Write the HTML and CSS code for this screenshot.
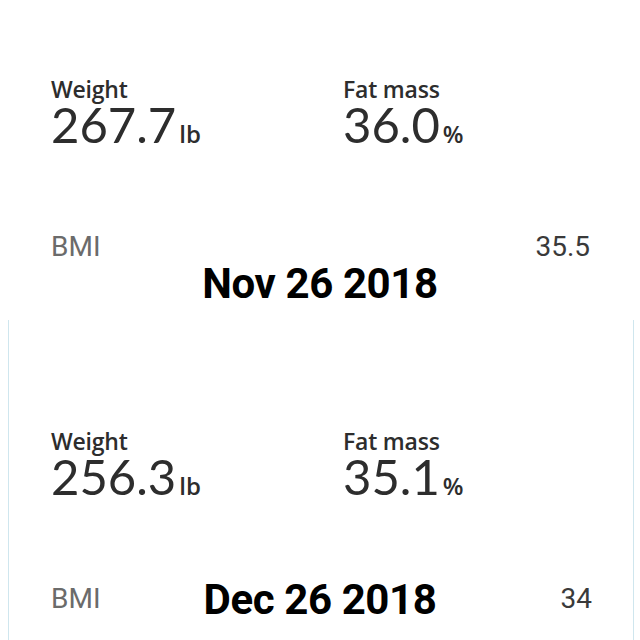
FILE: index.html
```html
<!DOCTYPE html>
<html>
<head>
<meta charset="utf-8">
<link rel="stylesheet" href="styles.css">
</head>
<body>
<div class="page">
  <section class="panel first">
    <div class="metrics">
      <div class="metric">
        <div class="label">Weight</div>
        <div class="value">267.7<span class="unit">lb</span></div>
      </div>
      <div class="metric">
        <div class="label">Fat mass</div>
        <div class="value">36.0<span class="unit">%</span></div>
      </div>
    </div>
    <div class="bmi">
      <span class="bmi-label">BMI</span>
      <span class="bmi-value">35.5</span>
    </div>
    <div class="date">Nov 26 2018</div>
  </section>
  <section class="panel second">
    <div class="metrics">
      <div class="metric">
        <div class="label">Weight</div>
        <div class="value">256.3<span class="unit">lb</span></div>
      </div>
      <div class="metric">
        <div class="label">Fat mass</div>
        <div class="value">35.1<span class="unit">%</span></div>
      </div>
    </div>
    <div class="bmi">
      <span class="bmi-label">BMI</span>
      <span class="bmi-value">34</span>
    </div>
    <div class="date overlay">Dec 26 2018</div>
  </section>
</div>
</body>
</html>
```
FILE: styles.css
```css
html, body {
  margin: 0;
  padding: 0;
  background: #ffffff;
}
.page {
  width: 640px;
  height: 640px;
  overflow: hidden;
  display: flex;
  flex-direction: column;
}
.panel {
  position: relative;
  box-sizing: border-box;
}
.first {
  height: 320px;
  padding-top: 77px;
}
.second {
  height: 320px;
  margin: 0 6px 0 8px;
  border-left: 1px solid #cfe6ee;
  border-right: 1px solid #cfe6ee;
  padding-top: 109px;
}
.metrics {
  display: grid;
  grid-template-columns: 292px 1fr;
  padding-left: 51px;
}
.second .metrics {
  padding-left: 42px;
}
.label {
  font-family: "Open Sans", sans-serif;
  font-size: 23px;
  font-weight: 600;
  color: #2d2d2d;
  line-height: 24px;
  letter-spacing: -0.2px;
}
.value {
  font-family: Lato, sans-serif;
  font-size: 49px;
  font-weight: 400;
  color: #2d2d2d;
  line-height: 40px;
  margin-top: 3px;
}
.unit {
  font-family: "Open Sans", sans-serif;
  font-size: 24px;
  font-weight: 600;
  margin-left: 3px;
}
.bmi {
  display: flex;
  justify-content: space-between;
  padding: 0 50px 0 51px;
  margin-top: 78px;
  font-family: Roboto, sans-serif;
  font-size: 28px;
  line-height: 30px;
}
.second .bmi {
  padding: 0 41px 0 42px;
}
.bmi-label {
  color: #6b6b6b;
}
.bmi-value {
  color: #3a3a3a;
}
.date {
  text-align: center;
  font-family: Roboto, sans-serif;
  font-weight: 700;
  font-size: 42px;
  line-height: 44px;
  color: #000000;
  letter-spacing: -0.4px;
  margin-top: 0;
}
.date.overlay {
  position: absolute;
  left: -8px;
  right: -6px;
  top: 258px;
  margin: 0;
}
```
